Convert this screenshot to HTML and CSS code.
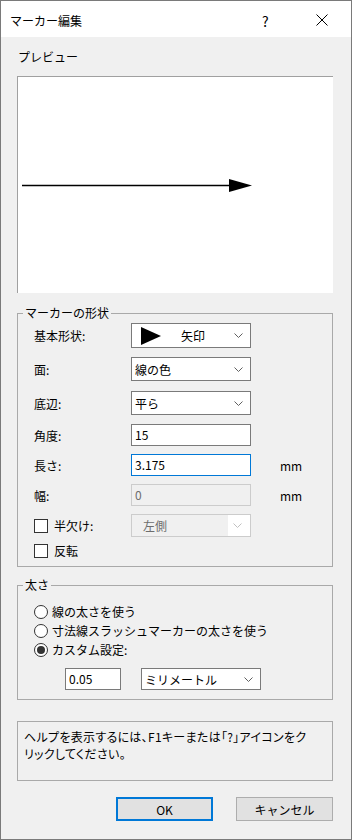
FILE: index.html
```html
<!DOCTYPE html>
<html lang="ja">
<head>
    <meta charset="UTF-8">
    <meta name="viewport" content="width=device-width, initial-scale=1.0">
    <title>マーカー編集</title>
    <link rel="stylesheet" href="styles.css">
</head>
<body>
    <div class="window">
        <div class="titlebar">
            <span class="title">マーカー編集</span>
            <span class="help-button">?</span>
            <span class="close-button">
                <svg width="12" height="12" viewBox="0 0 12 12">
                    <path d="M0.5 0.5 L11.5 11.5 M11.5 0.5 L0.5 11.5" stroke="#000" stroke-width="1" fill="none"/>
                </svg>
            </span>
        </div>

        <div class="dialog">
            <div class="caption">プレビュー</div>
            <div class="preview">
                <svg width="316" height="217" viewBox="0 0 316 217">
                    <line x1="5" y1="109.5" x2="215" y2="109.5" stroke="#000" stroke-width="1.5"/>
                    <polygon points="212,103 235,109.5 212,116" fill="#000"/>
                </svg>
            </div>

            <fieldset class="group shape-group">
                <legend>マーカーの形状</legend>
                <div class="rows">
                    <div class="row row-tall">
                        <span class="label">基本形状:</span>
                        <div class="combo">
                            <span class="shape-icon"></span>
                            <span class="combo-text shape-text">矢印</span>
                            <svg class="chevron" width="9" height="5" viewBox="0 0 9 5"><polyline points="0.5,0.5 4.5,4.5 8.5,0.5" fill="none" stroke="#606060"/></svg>
                        </div>
                    </div>
                    <div class="row row-select gap-9">
                        <span class="label">面:</span>
                        <div class="combo">
                            <span class="combo-text">線の色</span>
                            <svg class="chevron" width="9" height="5" viewBox="0 0 9 5"><polyline points="0.5,0.5 4.5,4.5 8.5,0.5" fill="none" stroke="#606060"/></svg>
                        </div>
                    </div>
                    <div class="row row-select gap-10">
                        <span class="label">底辺:</span>
                        <div class="combo">
                            <span class="combo-text">平ら</span>
                            <svg class="chevron" width="9" height="5" viewBox="0 0 9 5"><polyline points="0.5,0.5 4.5,4.5 8.5,0.5" fill="none" stroke="#606060"/></svg>
                        </div>
                    </div>
                    <div class="row row-input gap-9">
                        <span class="label">角度:</span>
                        <div class="textbox">15</div>
                    </div>
                    <div class="row row-input gap-8">
                        <span class="label">長さ:</span>
                        <div class="textbox focused">3.175</div>
                        <span class="unit">mm</span>
                    </div>
                    <div class="row row-input gap-8">
                        <span class="label">幅:</span>
                        <div class="textbox disabled">0</div>
                        <span class="unit">mm</span>
                    </div>
                    <div class="row row-half gap-8">
                        <span class="label check-label"><span class="checkbox"></span>半欠け:</span>
                        <div class="combo disabled">
                            <span class="combo-text">左側</span>
                            <span class="combo-button">
                                <svg class="chevron" width="9" height="5" viewBox="0 0 9 5"><polyline points="0.5,0.5 4.5,4.5 8.5,0.5" fill="none" stroke="#c0c0c0"/></svg>
                            </span>
                        </div>
                    </div>
                    <div class="row row-check gap-6">
                        <span class="label check-label"><span class="checkbox"></span>反転</span>
                    </div>
                </div>
            </fieldset>

            <fieldset class="group weight-group">
                <legend>太さ</legend>
                <div class="rows">
                    <div class="radio-row"><span class="radio"></span>線の太さを使う</div>
                    <div class="radio-row"><span class="radio"></span>寸法線スラッシュマーカーの太さを使う</div>
                    <div class="radio-row"><span class="radio checked"></span>カスタム設定:</div>
                    <div class="custom-row">
                        <div class="textbox small">0.05</div>
                        <div class="combo unit-combo">
                            <span class="combo-text">ミリメートル</span>
                            <svg class="chevron" width="9" height="5" viewBox="0 0 9 5"><polyline points="0.5,0.5 4.5,4.5 8.5,0.5" fill="none" stroke="#606060"/></svg>
                        </div>
                    </div>
                </div>
            </fieldset>

            <div class="help-box">
                ヘルプを表示するには、F1キーまたは「?」アイコンをク<br>リックしてください。
            </div>

            <div class="buttons">
                <button class="button default">OK</button>
                <button class="button">キャンセル</button>
            </div>
        </div>
    </div>
</body>
</html>
```

FILE: styles.css
```css
* {
    box-sizing: border-box;
}

body {
    margin: 0;
    padding: 0;
    font-family: "Noto Sans CJK JP", "Noto Sans", sans-serif;
    font-size: 12px;
    color: #000;
    background-color: #f0f0f0;
}

.window {
    width: 352px;
    height: 840px;
    border: 1px solid #7a7a7a;
    background-color: #f0f0f0;
}

.titlebar {
    height: 36px;
    background-color: #fff;
    display: flex;
    align-items: center;
    padding-left: 9px;
    padding-top: 3px;
}

.title {
    font-size: 12px;
    flex: 1;
}

.help-button {
    font-size: 14px;
    width: 8px;
    margin-right: 46px;
}

.close-button {
    display: flex;
    margin-right: 23px;
    margin-top: -2px;
}

.dialog {
    padding: 0 18px 0 16px;
}

.caption {
    margin-top: 12px;
    line-height: 16px;
    padding-left: 1px;
}

.preview {
    margin-top: 11px;
    height: 217px;
    background-color: #fff;
    border-top: 1px solid #a0a0a0;
    border-left: 1px solid #a0a0a0;
}

.preview svg {
    display: block;
    margin: -1px 0 0 -1px;
}

.group {
    margin: 0;
    padding: 0;
    border: 1px solid #a9a9a9;
    min-width: 0;
}

.group legend {
    margin-left: 5px;
    padding: 0 2px;
    line-height: 16px;
}

.shape-group {
    margin-top: 12px;
}

.shape-group .rows {
    display: flex;
    flex-direction: column;
    padding: 2px 0 8px 16px;
}

.row {
    display: flex;
    align-items: center;
}

.row-tall { height: 25px; }
.row-select { height: 24px; }
.row-input { height: 22px; }
.row-half { height: 23px; }
.row-check { height: 15px; }

.gap-6 { margin-top: 6px; }
.gap-8 { margin-top: 8px; }
.gap-9 { margin-top: 9px; }
.gap-10 { margin-top: 10px; }

.label {
    width: 97px;
    flex-shrink: 0;
}

.check-label {
    display: flex;
    align-items: center;
    gap: 6px;
}

.checkbox {
    width: 14px;
    height: 14px;
    border: 1px solid #333;
    background-color: #fff;
}

.combo {
    width: 120px;
    height: 100%;
    border: 1px solid #7a7a7a;
    background-color: #fff;
    display: flex;
    align-items: center;
    padding: 0 7px 0 3px;
}

.combo-text {
    flex: 1;
}

.shape-icon {
    width: 0;
    height: 0;
    margin-left: 6px;
    border-top: 9px solid transparent;
    border-bottom: 9px solid transparent;
    border-left: 20px solid #000;
}

.shape-text {
    padding-left: 20px;
}

.combo.disabled {
    border-color: #ccc;
    background-color: #fff;
    padding: 0;
    color: #6d6d6d;
}

.combo.disabled .combo-text {
    height: 100%;
    line-height: 21px;
    padding-left: 11px;
    background-color: #f0f0f0;
}

.combo-button {
    width: 22px;
    display: flex;
    justify-content: center;
    padding-right: 4px;
}

.textbox {
    width: 120px;
    height: 100%;
    border: 1px solid #7a7a7a;
    background-color: #fff;
    padding-left: 3px;
    line-height: 20px;
}

.textbox.focused {
    border-color: #0078d7;
}

.textbox.disabled {
    border-color: #ccc;
    background-color: #f0f0f0;
    color: #6d6d6d;
}

.unit {
    margin-left: 29px;
}

.weight-group {
    margin-top: 10px;
}

.weight-group .rows {
    padding: 9px 0 9px 16px;
}

.radio-row {
    height: 19px;
    display: flex;
    align-items: center;
    gap: 4px;
}

.radio {
    width: 14px;
    height: 14px;
    border: 1px solid #333;
    border-radius: 50%;
    background-color: #fff;
    display: flex;
    align-items: center;
    justify-content: center;
}

.radio.checked::after {
    content: "";
    width: 8px;
    height: 8px;
    border-radius: 50%;
    background-color: #333;
}

.custom-row {
    display: flex;
    height: 22px;
    margin-top: 9px;
    padding-left: 31px;
    gap: 20px;
}

.textbox.small {
    width: 56px;
}

.unit-combo {
    width: 120px;
}

.help-box {
    margin-top: 21px;
    height: 60px;
    border: 1px solid #a9a9a9;
    padding: 6px 6px;
    line-height: 17px;
    font-feature-settings: "palt";
    letter-spacing: 0.3px;
    white-space: nowrap;
}

.buttons {
    margin-top: 16px;
    display: flex;
    justify-content: flex-end;
    gap: 23px;
}

.button {
    width: 97px;
    height: 24px;
    font-family: inherit;
    font-size: 12px;
    background-color: #e1e1e1;
    border: 1px solid #adadad;
    padding: 0;
}

.button.default {
    border: 2px solid #0078d7;
}
```
